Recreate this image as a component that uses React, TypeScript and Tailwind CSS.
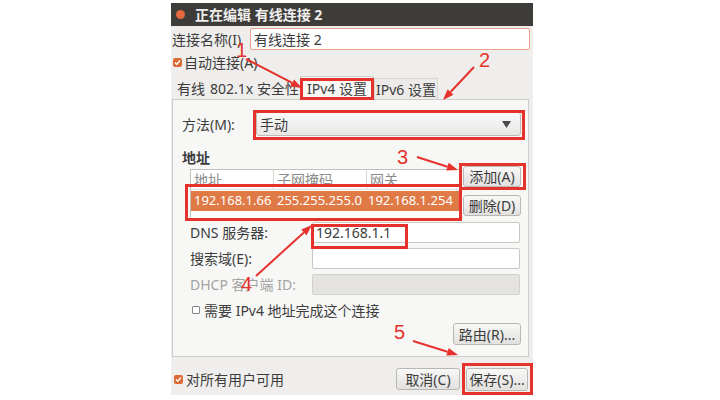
import React from "react";

const RED = "#e6322c";

const arrows = [
  { x1: 246, y1: 59, x2: 302, y2: 88 },
  { x1: 474, y1: 67, x2: 443, y2: 100 },
  { x1: 417, y1: 157, x2: 458, y2: 170 },
  { x1: 256, y1: 276, x2: 312, y2: 225 },
  { x1: 413, y1: 341, x2: 458, y2: 355 },
];

const boxes = [
  { x: 300, y: 78, w: 74, h: 22 },
  { x: 253, y: 110, w: 272, h: 30 },
  { x: 459, y: 163, w: 67, h: 27 },
  { x: 185, y: 184, w: 277, h: 37 },
  { x: 311, y: 224, w: 97, h: 25 },
  { x: 462, y: 363, w: 71, h: 32 },
];

const numbers = [
  { n: "1", x: 236, y: 40 },
  { n: "2", x: 479, y: 50 },
  { n: "3", x: 397, y: 147 },
  { n: "4", x: 241, y: 274 },
  { n: "5", x: 394, y: 322 },
];

function head(a: { x1: number; y1: number; x2: number; y2: number }) {
  const dx = a.x2 - a.x1;
  const dy = a.y2 - a.y1;
  const len = Math.hypot(dx, dy);
  const ux = dx / len;
  const uy = dy / len;
  const bx = a.x2 - ux * 11;
  const by = a.y2 - uy * 11;
  const p1 = `${bx - uy * 4},${by + ux * 4}`;
  const p2 = `${bx + uy * 4},${by - ux * 4}`;
  return { pts: `${a.x2},${a.y2} ${p1} ${p2}`, bx, by };
}

const Check = ({ checked }: { checked: boolean }) =>
  checked ? (
    <span className="w-[9px] h-[9px] rounded-[2px] bg-[#dd6b35] flex items-center justify-center">
      <svg width="7" height="7" viewBox="0 0 7 7">
        <path d="M1 3.6 L2.8 5.3 L6 1.5" stroke="#fff" strokeWidth="1.4" fill="none" />
      </svg>
    </span>
  ) : (
    <span className="w-[8px] h-[8px] border border-[#8a8a8a] bg-white rounded-[1px]" />
  );

const Btn = ({ label, className }: { label: string; className: string }) => (
  <div
    className={`flex items-center justify-center rounded-[3px] border border-[#b9b7b3] bg-gradient-to-b from-[#f8f8f7] to-[#e2e1df] text-[14px] text-[#3c3c3c] ${className}`}
  >
    {label}
  </div>
);

const Field = ({ label, value, disabled }: { label: string; value?: string; disabled?: boolean }) => (
  <div className="flex items-center h-[21px]">
    <span className={`w-[122px] text-[14px] ${disabled ? "text-[#a3a3a3]" : "text-[#3c3c3c]"}`}>{label}</span>
    <div
      className={`w-[208px] h-[21px] rounded-[2px] border flex items-center pl-[3px] text-[14px] text-[#3c3c3c] ${
        disabled ? "bg-[#e4e3e1] border-[#d3d1ce]" : "bg-white border-[#cbc9c5]"
      }`}
    >
      {value}
    </div>
  </div>
);

export default function App() {
  return (
    <div className="relative w-[720px] h-[400px] bg-white overflow-hidden font-['Noto_Sans','Noto_Sans_CJK_SC',sans-serif] text-[#3c3c3c]">
      <div className="ml-[171px] pt-[3px] w-[362px]">
        {/* title bar */}
        <div className="h-[23px] bg-[#3d3c38] flex items-center">
          <span className="ml-[5px] w-[9px] h-[9px] rounded-full bg-[#e5683f]" />
          <span className="ml-[10px] text-[14px] font-bold text-[#efefef]">正在编辑 有线连接 2</span>
        </div>

        <div className="bg-[#efeeec] h-[369px] flex flex-col">
          {/* name */}
          <div className="mt-[2px] h-[22px] flex items-center">
            <span className="w-[79px] pl-[1px] text-[14px]">连接名称(I)</span>
            <div className="w-[280px] h-[22px] bg-white border border-[#eba08b] rounded-[2px] flex items-center pl-[3px] text-[14px]">
              有线连接 2
            </div>
          </div>

          {/* auto connect */}
          <div className="mt-[3px] h-[18px] flex items-center pl-[2px] gap-[2px]">
            <Check checked />
            <span className="text-[14px]">自动连接(A)</span>
          </div>

          {/* tabs */}
          <div className="mt-[5px] h-[23px] flex items-end pl-[2px] text-[14px]">
            <div className="w-[36px] h-[21px] flex items-center justify-center">有线</div>
            <div className="w-[91px] h-[21px] flex items-center justify-center whitespace-nowrap">802.1x 安全性</div>
            <div className="w-[74px] h-[23px] flex items-center justify-center bg-[#f7f7f6] border border-b-0 border-[#cfcdca] whitespace-nowrap">
              IPv4 设置
            </div>
            <div className="w-[64px] h-[21px] flex items-center justify-center border border-b-0 border-[#d8d6d3] bg-[#ecebe9] whitespace-nowrap">
              IPv6 设置
            </div>
          </div>

          {/* panel */}
          <div className="ml-[1px] w-[357px] h-[258px] border border-[#cfcdca] bg-[#f7f7f6] flex flex-col pr-[7px]">
            <div className="mt-[12px] flex items-center h-[24px]">
              <span className="pl-[9px] w-[83px] text-[14px]">方法(M):</span>
              <div className="w-[265px] h-[24px] rounded-[3px] border border-[#bdbbb7] bg-gradient-to-b from-[#fafafa] to-[#e8e7e5] flex items-center justify-between pl-[3px] pr-[9px] text-[14px]">
                <span>手动</span>
                <svg width="9" height="7" viewBox="0 0 9 7">
                  <path d="M0 0 H9 L4.5 7 Z" fill="#4a4a4a" />
                </svg>
              </div>
            </div>

            <div className="mt-[14px] h-[16px] pl-[9px] text-[14px] font-bold leading-[16px]">地址</div>

            <div className="pl-[17px] flex items-start gap-[3px]">
              <div className="mt-[3px] w-[270px] h-[50px] bg-white border border-[#c4c2be] flex flex-col">
                <div className="h-[20px] flex text-[14px] text-[#8a8a8a] border-b border-[#e2e1df] overflow-hidden">
                  <span className="w-[83px] pl-[3px] border-r border-[#d9d7d4] leading-[20px]">地址</span>
                  <span className="w-[93px] pl-[3px] border-r border-[#d9d7d4] leading-[20px]">子网掩码</span>
                  <span className="pl-[3px] leading-[20px]">网关</span>
                </div>
                <div className="mt-[1px] h-[20px] bg-[#df7a46] flex items-center text-[13px] text-white whitespace-nowrap">
                  <span className="w-[86px] pl-[3px]">192.168.1.66</span>
                  <span className="w-[91px]">255.255.255.0</span>
                  <span>192.168.1.254</span>
                </div>
              </div>
              <div className="flex flex-col gap-[8px]">
                <Btn label="添加(A)" className="w-[58px] h-[21px]" />
                <Btn label="删除(D)" className="w-[58px] h-[21px]" />
              </div>
            </div>

            <div className="mt-[3px] pl-[17px] flex flex-col gap-[5px]">
              <Field label="DNS 服务器:" value="192.168.1.1" />
              <Field label="搜索域(E):" />
              <Field label="DHCP 客户端 ID:" disabled />
            </div>

            <div className="mt-[7px] h-[16px] pl-[19px] flex items-center gap-[4px] text-[14px]">
              <Check checked={false} />
              <span>需要 IPv4 地址完成这个连接</span>
            </div>

            <div className="mt-[5px] flex justify-end">
              <Btn label="路由(R)..." className="w-[68px] h-[22px]" />
            </div>
          </div>

          {/* bottom */}
          <div className="mt-[11px] h-[22px] flex items-center pl-[3px] pr-[5px]">
            <Check checked />
            <span className="ml-[3px] text-[14px]">对所有用户可用</span>
            <div className="flex-1" />
            <Btn label="取消(C)" className="w-[64px] h-[22px]" />
            <Btn label="保存(S)..." className="ml-[6px] w-[62px] h-[23px]" />
          </div>
        </div>
      </div>

      {/* annotations */}
      <svg className="absolute left-0 top-0 pointer-events-none" width="720" height="400">
        {boxes.map((b, i) => (
          <rect key={i} x={b.x + 1.5} y={b.y + 1.5} width={b.w - 3} height={b.h - 3} fill="none" stroke={RED} strokeWidth="3" />
        ))}
        {arrows.map((a, i) => {
          const h = head(a);
          return (
            <g key={i}>
              <line x1={a.x1} y1={a.y1} x2={h.bx} y2={h.by} stroke={RED} strokeWidth="2" />
              <polygon points={h.pts} fill={RED} />
            </g>
          );
        })}
      </svg>
      {numbers.map((n) => (
        <span
          key={n.n}
          className="absolute text-[20px] leading-[20px] text-[#e6322c] font-['Liberation_Sans',sans-serif]"
          style={{ left: n.x, top: n.y }}
        >
          {n.n}
        </span>
      ))}
    </div>
  );
}
